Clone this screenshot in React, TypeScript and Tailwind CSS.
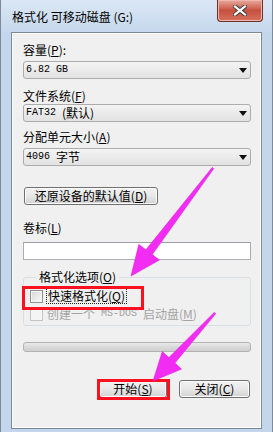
const CJK = "font-['Noto_Sans_CJK_SC',sans-serif]";
const MONO = "font-['Liberation_Mono','Noto_Sans_CJK_SC',monospace] text-[10px]";

function Key({ k }: { k: string }) {
  return (
    <span>
      (<span className="underline underline-offset-1">{k}</span>)
    </span>
  );
}

function Combo({ children }: { children: React.ReactNode }) {
  return (
    <div className="h-[18px] flex items-center justify-between rounded-[3px] border border-[#acacac] bg-gradient-to-b from-[#f4f4f4] to-[#e2e2e2] pl-[2px] pr-[3px]">
      <div className="flex items-center text-[12px] leading-[14px] text-black">{children}</div>
      <svg width="8" height="5" viewBox="0 0 8 5">
        <polygon points="0,0 8,0 4,5" fill="#111" />
      </svg>
    </div>
  );
}

function Label({ children, mt }: { children: React.ReactNode; mt: string }) {
  return <div className={`${mt} h-[14px] text-[12px] leading-[14px] text-black`}>{children}</div>;
}

function Button({ children, w }: { children: React.ReactNode; w: string }) {
  return (
    <div
      className={`${w} h-[18px] flex items-center justify-center rounded-[3px] border border-[#707070] bg-gradient-to-b from-[#f2f2f2] via-[#e8e8e8] to-[#d2d2d2] text-[12px] leading-[14px] text-black shadow-[inset_0_0_0_1px_#fcfcfc]`}
    >
      {children}
    </div>
  );
}

function Arrow({ points }: { points: string }) {
  return <polygon points={points} fill="#f22cf2" stroke="#e01ee0" strokeWidth="0.6" strokeLinejoin="round" />;
}

export default function App() {
  return (
    <div className={`${CJK} relative w-[273px] h-[432px] overflow-hidden bg-[#c4d6eb] border-x border-[#7d8a99]`}>
      {/* Title bar */}
      <div className="h-[32px] flex items-start justify-between bg-gradient-to-b from-[#dbe7f5] to-[#c6d8ed]">
        <span className="pl-[11px] pt-[9px] text-[12px] leading-[16px] text-black">格式化 可移动磁盘 (G:)</span>
        <div className="mr-[9px] w-[46px] h-[22px] flex items-center justify-center rounded-b-[4px] border border-t-0 border-[#6b3128] bg-gradient-to-b from-[#e6aa9f] via-[#c8503f] to-[#d7705f] shadow-[inset_0_0_0_1px_#f0b7ad]">
          <svg width="14" height="11" viewBox="0 0 14 11">
            <path d="M2 1.5 L12 9.5 M12 1.5 L2 9.5" stroke="#43403f" strokeWidth="4.2" strokeLinecap="square" />
            <path d="M2 1.5 L12 9.5 M12 1.5 L2 9.5" stroke="#ffffff" strokeWidth="2.2" strokeLinecap="square" />
          </svg>
        </div>
      </div>

      {/* Client area */}
      <div className="mx-[10px] h-[397px] flex flex-col border border-[#7b8898] bg-[#f0f0f0] pl-[11px] pr-[10px] shadow-[inset_0_0_0_1px_#ffffff]">
        <Label mt="mt-[10px]">
          容量<Key k="P" />:
        </Label>
        <div className="mt-[4px]">
          <Combo>
            <span className={MONO}>6.82 GB</span>
          </Combo>
        </div>

        <Label mt="mt-[10px]">
          文件系统<Key k="F" />
        </Label>
        <div className="mt-[1px]">
          <Combo>
            <span className={MONO}>FAT32 </span>
            <span className="pl-[6px]">(默认)</span>
          </Combo>
        </div>

        <Label mt="mt-[8px]">
          分配单元大小<Key k="A" />
        </Label>
        <div className="mt-[4px]">
          <Combo>
            <span className={MONO}>4096</span>
            <span className="pl-[6px]">字节</span>
          </Combo>
        </div>

        <div className="mt-[21px] pl-[1px]">
          <Button w="w-[134px]">
            还原设备的默认值<Key k="D" />
          </Button>
        </div>

        <Label mt="mt-[16px]">
          卷标<Key k="L" />
        </Label>
        <div className="mt-[7px] h-[18px] border border-[#abadb3] border-t-[#9a9da5] bg-white" />

        <fieldset className="mt-[10px] rounded-[3px] border border-[#d5dfe5] pl-[6px] pb-[4px]">
          <legend className="ml-[6px] px-[3px] text-[12px] leading-[14px] text-black">
            格式化选项<Key k="O" />
          </legend>
          <div className="mt-[5px] h-[14px] flex items-center gap-[3px]">
            <div className="w-[13px] h-[13px] border border-[#8e8f8f] bg-gradient-to-br from-[#d6d6d6] to-[#fafafa] shadow-[inset_0_0_0_1px_#f4f4f4]" />
            <span className="h-[16px] px-[1px] border border-dotted border-[#222] text-[12px] leading-[14px] text-black">
              快速格式化<Key k="Q" />
            </span>
          </div>
          <div className="mt-[4px] h-[14px] flex items-center gap-[4px] text-[#a3a3a3]">
            <div className="w-[13px] h-[13px] border border-[#c4c4c4] bg-[#f4f4f4]" />
            <span className="flex items-center text-[12px] leading-[14px]">
              创建一个<span className={`${MONO} px-[6px]`}>MS-DOS</span>启动盘<Key k="M" />
            </span>
          </div>
        </fieldset>

        <div className="mt-[16px] h-[10px] rounded-[3px] border border-[#b2b2b2] bg-gradient-to-b from-[#e9e9e9] via-[#dadada] to-[#cfcfcf]" />

        <div className="mt-[28px] flex justify-end gap-[12px] pr-[1px]">
          <Button w="w-[68px]">
            开始<Key k="S" />
          </Button>
          <Button w="w-[71px]">
            关闭<Key k="C" />
          </Button>
        </div>
      </div>

      {/* Annotations */}
      <div className="absolute left-[21px] top-[286px] w-[122px] h-[24px] border-[3px] border-[#ff1020]" />
      <div className="absolute left-[96px] top-[379px] w-[73px] h-[21px] border-[3px] border-[#ff1020]" />
      <svg className="absolute inset-0 pointer-events-none" width="273" height="432" viewBox="0 0 273 432">
        <Arrow points="212.8,168.6 151.3,254.6 158.4,260 130,276 137.8,244.4 144.9,249.8 211.2,167.4" />
        <Arrow points="214.8,313.6 173.9,363 180.5,369.1 152,381 161.3,351.5 167.9,357.6 213.2,312.4" />
      </svg>
    </div>
  );
}
